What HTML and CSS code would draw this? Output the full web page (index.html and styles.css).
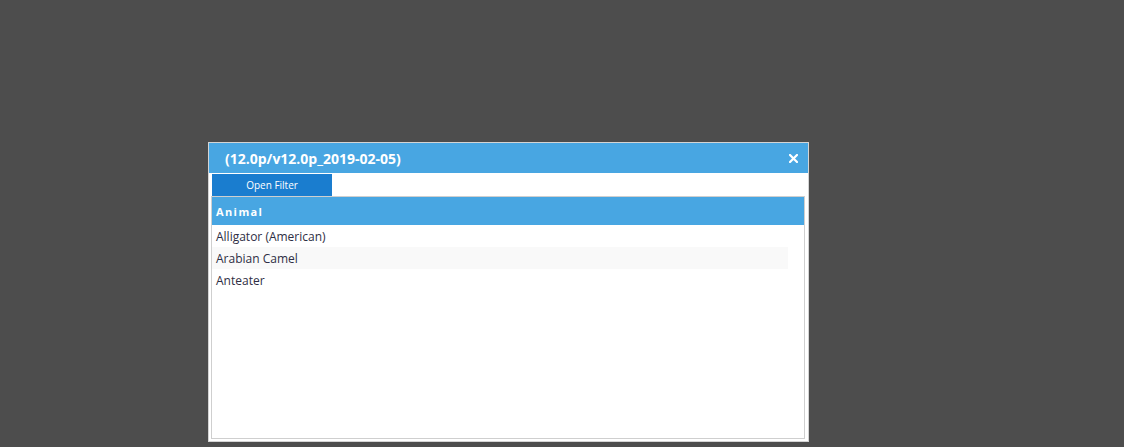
FILE: index.html
```html
<!DOCTYPE html>
<html>
<head>
<meta charset="utf-8">
<link rel="stylesheet" href="styles.css">
</head>
<body>
<div class="dialog">
  <div class="titlebar">
    <span class="title">(12.0p/v12.0p_2019-02-05)</span>
    <svg class="close" width="9" height="9" viewBox="0 0 9 9"><path d="M1 1L8 8M8 1L1 8" stroke="#fff" stroke-width="2.2" stroke-linecap="square"/></svg>
  </div>
  <div class="body">
    <div class="toolbar"><button class="filter-btn">Open Filter</button></div>
    <div class="grid">
      <div class="grid-header">Animal</div>
      <div class="rows">
        <div class="row">Alligator (American)</div>
        <div class="row alt">Arabian Camel</div>
        <div class="row">Anteater</div>
      </div>
    </div>
  </div>
</div>
</body>
</html>
```
FILE: styles.css
```css
html, body {
  margin: 0;
  padding: 0;
  background: #4d4d4d;
  width: 1124px;
  height: 447px;
  overflow: hidden;
}
body {
  padding: 142px 0 0 208px;
  box-sizing: border-box;
  font-family: "Open Sans", "DejaVu Sans", sans-serif;
}
.dialog {
  width: 601px;
  height: 300px;
  box-sizing: border-box;
  border: 1px solid #d4d4d4;
  background: #fff;
  display: flex;
  flex-direction: column;
}
.titlebar {
  height: 30px;
  background: #48a6e2;
  color: #fff;
  display: flex;
  align-items: center;
  justify-content: space-between;
  padding: 0 10px 0 16px;
  flex: none;
}
.title {
  font-weight: 700;
  font-size: 14px;
}
.close {
  display: block;
}
.body {
  flex: 1;
  display: flex;
  flex-direction: column;
  padding: 1px 2px 2px 2px;
}
.toolbar {
  display: flex;
  height: 22px;
  flex: none;
  padding-left: 1px;
}
.filter-btn {
  width: 120px;
  height: 22px;
  border: none;
  background: #1a7dcf;
  color: #fff;
  font-family: "Open Sans", "DejaVu Sans", sans-serif;
  font-size: 10px;
  padding: 0;
}
.grid {
  flex: 1;
  border: 1px solid #cfcfcf;
  margin-right: 1px;
  display: flex;
  flex-direction: column;
}
.grid-header {
  height: 28px;
  background: #48a6e2;
  color: #fff;
  font-weight: 700;
  font-size: 11px;
  letter-spacing: 1.4px;
  display: flex;
  align-items: center;
  padding-left: 4px;
  flex: none;
}
.rows {
  padding: 0 16px 0 0;
}
.row {
  height: 22px;
  display: flex;
  align-items: center;
  padding-left: 4px;
  font-size: 12px;
  color: #2e2e44;
}
.row.alt {
  background: #f9f9f9;
}
```
